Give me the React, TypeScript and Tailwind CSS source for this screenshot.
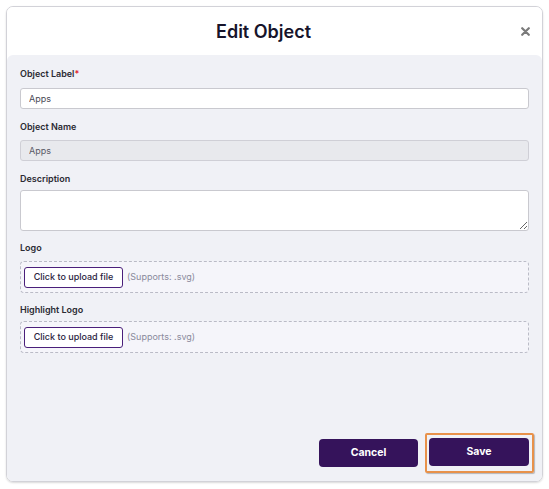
import React from "react";

function UploadBox() {
  return (
    <div className="flex h-[32px] items-center gap-[4px] rounded-[4px] border border-dashed border-[#babbc6] bg-[#f5f5fa] px-[3px]">
      <button
        type="button"
        className="flex h-[21px] w-[99px] items-center justify-center rounded-[3px] border border-[#4a1f7a] bg-white text-[9px] font-medium text-[#2a2340]"
      >
        Click to upload file
      </button>
      <span className="text-[9px] text-[#8a8a9c]">(Supports: .svg)</span>
    </div>
  );
}

export default function App() {
  return (
    <div
      className="h-[489px] w-[549px] bg-white pl-[6px] pt-[6px]"
      style={{ fontFamily: "Inter, 'Noto Sans', sans-serif" }}
    >
      <div className="flex h-[476px] w-[537px] flex-col overflow-hidden rounded-[7px] border border-[#d2d2d8] shadow-[0_1px_2px_rgba(0,0,0,0.15)]">
        <div className="relative flex h-[48px] items-center justify-center bg-white pr-[22px]">
          <h1 className="text-[18px] font-semibold text-[#16142b]">Edit Object</h1>
          <button type="button" className="absolute right-[12px] top-[20px] text-[#7a7a7a]">
            <svg width="9" height="9" viewBox="0 0 9 9">
              <path d="M1.2 1.2 L7.8 7.8 M7.8 1.2 L1.2 7.8" stroke="currentColor" strokeWidth="2.2" strokeLinecap="round" />
            </svg>
          </button>
        </div>

        <div className="flex flex-1 flex-col rounded-t-[6px] bg-[#f0f1f6] px-[13px] pb-[8px] pt-[13px]">
          <label className="text-[9px] font-semibold leading-[12px] text-[#2b2b33]">
            Object Label<span className="text-[#e11d2e]">*</span>
          </label>
          <input
            className="mt-[8px] h-[21px] rounded-[3px] border border-[#c9c9cf] bg-white px-[8px] text-[9px] text-[#4a4a55] outline-none"
            defaultValue="Apps"
          />

          <label className="mt-[12px] text-[9px] font-semibold leading-[12px] text-[#2b2b33]">Object Name</label>
          <input
            className="mt-[7px] h-[21px] rounded-[3px] border border-[#cfcfd6] bg-[#e8e9ed] px-[8px] text-[9px] text-[#5a5a66] outline-none"
            defaultValue="Apps"
            disabled
          />

          <label className="mt-[12px] text-[9px] font-semibold leading-[12px] text-[#2b2b33]">Description</label>
          <textarea className="mt-[5px] h-[41px] rounded-[3px] border border-[#c9c9cf] bg-white px-[8px] py-[4px] text-[9px] outline-none" />

          <label className="mt-[11px] text-[9px] font-semibold leading-[12px] text-[#2b2b33]">Logo</label>
          <div className="mt-[7px]">
            <UploadBox />
          </div>

          <label className="mt-[11px] text-[9px] font-semibold leading-[12px] text-[#2b2b33]">Highlight Logo</label>
          <div className="mt-[5px]">
            <UploadBox />
          </div>

          <div className="flex-1" />

          <div className="flex items-center justify-end gap-[7px]">
            <button
              type="button"
              className="h-[28px] w-[99px] rounded-[4px] bg-[#35135b] text-[10.5px] font-bold text-white"
            >
              Cancel
            </button>
            <span className="-mr-[5px] rounded-[2px] border-2 border-[#e8914a] pb-[5px] pl-[2px] pr-[3px] pt-[3px] shadow-[1px_1px_1px_rgba(0,0,0,0.25)]">
              <button
                type="button"
                className="block h-[28px] w-[100px] rounded-[4px] bg-[#35135b] text-[10.5px] font-bold text-white"
              >
                Save
              </button>
            </span>
          </div>
        </div>
      </div>
    </div>
  );
}
